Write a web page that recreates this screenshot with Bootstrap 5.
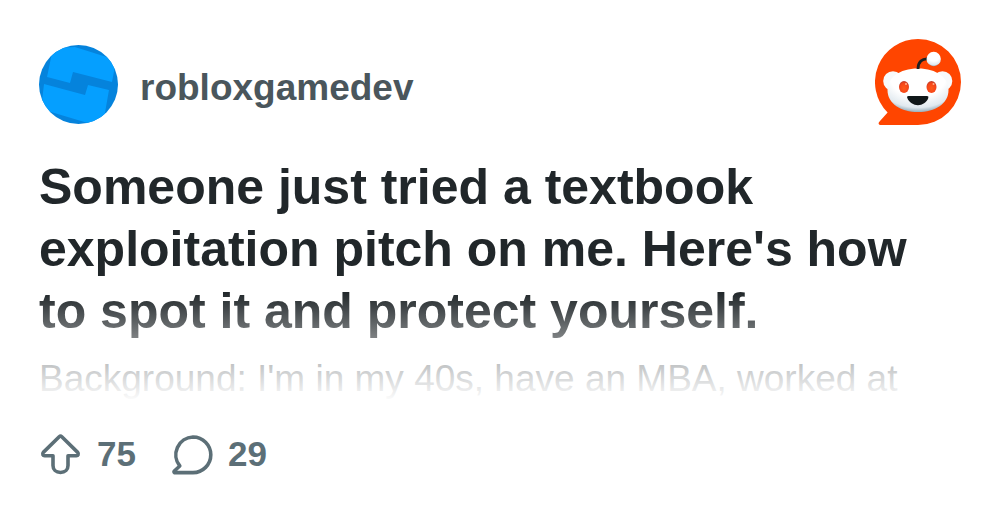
<!DOCTYPE html>
<html lang="en">
<head>
<meta charset="utf-8">
<meta name="viewport" content="width=device-width, initial-scale=1">
<title>robloxgamedev</title>
<link rel="stylesheet" href="https://cdn.jsdelivr.net/npm/bootstrap@5.3.0/dist/css/bootstrap.min.css">
<style>
  body { font-family: "Liberation Sans", Arial, sans-serif; background: #fff; color: #21272a; }
  .post { padding: 39px 39px 0; }
  .community { font-size: 37px; line-height: 44px; color: #4a565c; padding: 12px 0 0 22px; }
  .excerpt { margin-top: 31px; height: 246px; }
  .headline { font-size: 50px; line-height: 62px; }
  .teaser { font-size: 37px; line-height: 50px; margin-top: 12px; color: #4c5357; }
  .fade-out { height: 110px; background: linear-gradient(rgba(255,255,255,0), #fff); }
  .stats { margin-top: 28px; color: #5c6f77; font-size: 35px; line-height: 44px; }
  .stat-count { padding: 2px 0 0 14px; }
  .stat-gap { margin-left: 34px; }
</style>
</head>
<body>
<main class="post">
  <header class="d-flex align-items-center justify-content-between">
    <div class="d-flex align-items-center">
      <svg width="79" height="79" viewBox="0 0 79 79" class="mt-1" role="img" aria-label="Community icon">
        <defs><clipPath id="disc"><circle cx="39.500" cy="39.500" r="39.500"/></clipPath></defs>
        <g clip-path="url(#disc)">
          <path fill="#0583dc" d="M0 0h79v79H0z"/>
          <path fill="#059fff" d="M14 3L36 2L74 14L77 16L73 37L34 27L31 38L8 32Z"/>
          <path fill="#059fff" d="M5 39L46 50L49 40L70 45L64 79L52 79L2 64Z"/>
        </g>
      </svg>
      <span class="community fw-bold">robloxgamedev</span>
    </div>
    <svg width="86" height="86" viewBox="0 0 86 86" role="img" aria-label="Reddit">
      <defs>
        <radialGradient id="face" cx=".5" cy=".2" r=".82"><stop offset=".55" stop-color="#fff"/><stop offset=".85" stop-color="#e0e9ef"/><stop offset="1" stop-color="#8ba4b2"/></radialGradient>
        <radialGradient id="eye" cx=".5" cy=".6" r=".6"><stop offset="0" stop-color="#ff5a18"/><stop offset=".7" stop-color="#f54518"/><stop offset="1" stop-color="#b83a2a"/></radialGradient>
      </defs>
      <path fill="#ff4500" d="M43 0A43 43 0 0 1 43 86H6C3 86 3 84 5 82L12.600 73.400A43 43 0 0 1 43 0Z"/>
      <circle cx="18" cy="42" r="9.800" fill="#f8fafb"/>
      <circle cx="67.500" cy="42" r="9.800" fill="#f8fafb"/>
      <path d="M43 29.500C62 29.500 73.500 39 73.500 51C73.500 65 60 73 43 73S12.500 65 12.500 51C12.500 39 24 29.500 43 29.500Z" fill="url(#face)"/>
      <path d="M43 30C43 23 47 19 54 20" fill="none" stroke="#1c2022" stroke-width="2.800"/>
      <circle cx="58.700" cy="20" r="7.200" fill="url(#face)"/>
      <ellipse cx="29" cy="48" rx="5" ry="6" fill="url(#eye)"/>
      <ellipse cx="56.500" cy="48" rx="5" ry="6" fill="url(#eye)"/>
      <circle cx="31" cy="45" r="1" fill="#ffb08a"/>
      <circle cx="58.500" cy="45" r="1" fill="#ffb08a"/>
      <path d="M33.500 57H52Q54 57 53.300 59C50 68.500 36 68.500 32.300 59Q31.500 57 33.500 57Z" fill="#101719"/>
    </svg>
  </header>

  <section class="excerpt position-relative overflow-hidden">
    <h1 class="headline fw-bold mb-0">Someone just tried a textbook exploitation pitch on me. Here's how to spot it and protect yourself.</h1>
    <p class="teaser mb-0">Background: I'm in my 40s, have an MBA, worked at</p>
    <div class="fade-out position-absolute bottom-0 start-0 end-0"></div>
  </section>

  <footer class="stats d-flex align-items-center fw-bold">
    <svg width="44" height="44" viewBox="0 0 44 44" fill="none" stroke="currentColor" stroke-width="3.600" stroke-linejoin="round" aria-hidden="true">
      <path d="M20.200 5.700L4.300 21.400C3 23 4 24.700 5.600 24.700H14V34.500C14 38.500 17 41.500 21.500 41.500S29 38.500 29 34.500V24.700H37.400C39 24.700 40 23 38.700 21.400L22.800 5.700Q21.500 4.500 20.200 5.700Z"/>
    </svg>
    <span class="stat-count">75</span>
    <svg class="stat-gap" width="44" height="44" viewBox="0 0 44 44" fill="none" stroke="currentColor" stroke-width="3.600" stroke-linejoin="round" aria-hidden="true">
      <path d="M23 6A17.800 17.800 0 0 1 23 41.600H4.500Q3.500 41 4.300 40L9.800 35A17.800 17.800 0 0 1 23 6Z"/>
    </svg>
    <span class="stat-count">29</span>
  </footer>
</main>
<script src="https://cdn.jsdelivr.net/npm/bootstrap@5.3.0/dist/js/bootstrap.bundle.min.js"></script>
</body>
</html>
